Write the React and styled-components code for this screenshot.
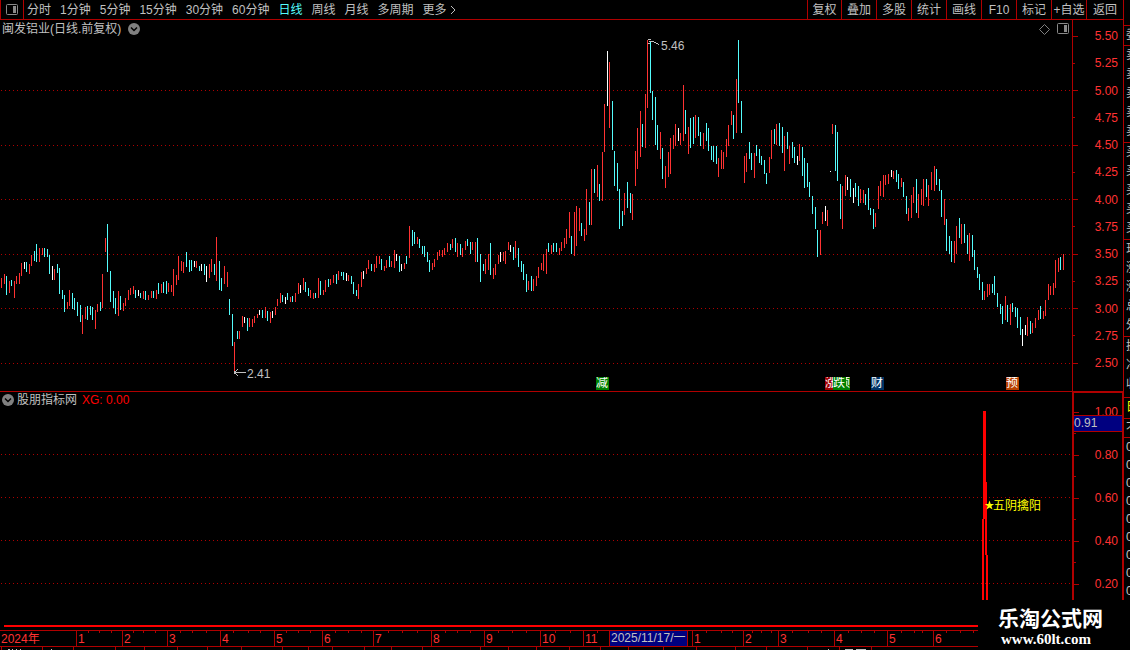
import styled, { createGlobalStyle } from "styled-components";
import { useState } from "react";

const LINE = "#b00000";
const RED = "#ff3232";
const CYAN = "#54fcfc";
const TEXT = "#c0c0c0";

const PLOT_WIDTH = 1072;
const PRICE_TOP = 20;
const PRICE_HEIGHT = 371;
const SIGNAL_TOP = 392;
const SIGNAL_HEIGHT = 238;

// colour, x, high, low
const BARS = `
r,1,278,288 r,4,274,284 c,6,276,295 r,9,281,293 c,11,280,286 r,14,281,298 r,16,276,284 r,19,273,284
r,21,263,276 w,24,262,269 c,26,262,272 r,29,264,274 r,31,255,266 c,34,251,261 c,36,244,262 r,39,248,262
r,42,248,255 c,44,248,257 c,47,249,257 c,49,255,274 w,52,266,280 r,54,269,280 c,57,264,273 c,59,268,294
c,62,290,299 c,64,295,312 r,67,302,309 r,69,290,306 c,72,293,309 c,74,298,310 c,77,302,316 c,80,305,322
r,82,315,334 r,85,307,319 c,87,306,320 c,90,306,315 c,92,307,320 r,95,310,329 r,97,304,312 c,100,302,311
r,102,274,308 r,105,238,252 c,107,224,272 c,110,271,302 c,113,291,308 c,115,298,314 r,118,291,316
c,120,296,310 r,123,303,311 r,125,298,306 r,128,290,300 r,130,288,295 r,133,286,294 c,135,290,298
w,138,290,296 c,140,293,298 r,143,291,299 c,145,291,300 r,148,295,300 r,151,291,298 c,153,291,298
r,156,290,299 c,158,283,294 r,161,284,293 c,163,282,293 c,166,281,294 r,168,283,292 r,171,285,292
r,173,269,296 r,176,275,285 r,178,256,280 r,181,261,271 r,183,262,273 c,186,252,267 c,189,260,272
c,191,260,271 w,194,261,267 r,196,261,268 c,199,266,271 w,201,264,271 c,204,264,275 w,206,266,282
r,209,264,278 r,211,259,272 c,214,264,275 r,216,237,281 c,219,261,290 c,221,278,291 r,224,266,284
r,227,272,287 c,229,299,315 c,232,314,346 r,234,342,373 c,237,331,339 r,239,331,339 r,242,316,327
w,244,317,323 c,247,318,331 r,249,318,327 r,252,319,327 r,254,316,323 r,257,314,318 w,259,310,315
c,262,310,318 r,265,307,318 c,267,311,321 r,270,312,323 w,272,311,318 r,275,307,315 r,277,299,306
r,280,293,303 c,282,295,302 w,285,297,304 c,287,293,300 r,290,297,302 c,292,296,302 r,295,293,302
r,298,283,294 w,300,285,293 r,303,278,290 c,305,282,292 c,308,288,296 r,310,290,298 r,313,293,299
c,315,293,298 r,318,278,298 c,320,281,295 r,323,290,295 r,325,280,292 c,328,279,287 r,330,279,285
r,333,275,283 c,336,274,284 r,338,271,280 c,341,272,276 c,343,272,280 w,346,273,281 r,348,275,281
c,351,276,284 c,353,282,294 c,356,290,296 r,358,284,299 r,361,272,287 w,363,271,279 r,366,268,274
r,368,260,269 c,371,264,271 r,374,264,272 r,376,256,268 r,379,256,264 c,381,259,270 r,384,266,271
r,386,260,268 c,389,256,267 r,391,261,267 r,394,250,268 w,396,254,261 c,399,256,272 w,401,264,271
r,404,263,269 c,406,256,264 r,409,226,258 c,412,230,246 c,414,232,244 r,417,237,244 c,419,239,248
c,422,246,254 c,424,246,257 c,427,252,262 c,429,260,272 r,432,263,270 r,434,259,267 r,437,252,260
r,439,250,256 r,442,250,257 r,444,248,255 r,447,243,252 c,450,244,250 r,452,239,248 c,455,238,252
r,457,243,257 c,460,244,255 r,462,248,257 r,465,241,250 c,467,239,246 c,470,242,254 r,472,242,250
r,475,242,262 c,477,238,262 c,480,254,282 c,483,264,271 r,485,259,274 r,488,254,270 c,490,243,275
r,493,268,279 r,495,264,275 r,498,255,264 w,500,252,262 r,503,252,261 r,505,251,264 r,508,242,250
w,510,245,252 c,513,247,260 r,515,241,258 c,518,248,267 c,521,261,272 c,523,264,280 c,526,274,292
r,528,281,290 c,531,276,291 r,533,279,291 r,536,276,286 r,538,267,278 r,541,263,270 r,543,254,271
r,546,249,274 c,548,243,252 r,551,245,254 c,553,243,252 c,556,243,252 r,559,248,255 r,561,242,251
r,564,238,248 r,566,229,244 r,569,212,238 c,571,236,254 r,574,212,256 r,576,206,246 r,579,208,231
c,581,223,236 r,584,229,241 r,586,189,235 c,589,202,225 r,591,169,225 c,594,169,193 r,597,165,197
c,599,184,201 r,602,152,201 r,604,104,152 w,607,51,106 r,609,62,128 c,612,101,150 c,614,151,186
c,617,163,191 c,619,189,229 c,622,211,226 r,624,193,215 c,627,182,208 c,630,193,213 r,632,194,220
r,635,151,186 r,637,128,169 r,640,111,157 c,642,124,147 r,645,94,148 r,647,40,108 c,650,42,93
c,652,91,120 c,655,97,145 c,657,125,150 r,660,132,159 c,662,148,179 r,665,166,188 r,668,152,177
r,670,138,174 r,673,135,149 r,675,124,146 w,678,128,141 r,680,133,145 r,683,85,141 c,685,110,134
r,688,127,154 c,690,118,148 c,693,117,144 r,695,115,138 c,698,117,136 c,700,132,146 r,703,133,149
c,706,123,141 c,708,128,151 c,711,146,160 c,713,146,162 c,716,146,164 r,718,158,177 r,721,150,169
r,723,152,169 r,726,139,157 r,728,125,146 r,731,111,125 c,733,115,139 r,736,79,133 c,738,40,103
c,741,101,133 r,744,156,183 r,746,153,172 c,749,142,159 c,751,153,170 r,754,153,178 c,756,145,156
c,759,149,163 c,761,156,165 c,764,160,174 c,766,173,184 r,769,157,173 r,771,130,159 c,774,129,144
r,776,124,145 c,779,123,146 c,782,127,153 r,784,136,171 c,787,132,149 r,789,146,164 c,792,142,158
c,794,147,163 w,797,156,165 r,799,144,161 c,802,147,176 c,804,158,188 c,807,163,187 c,809,182,197
c,812,196,214 c,815,207,229 c,817,230,257 r,820,230,255 r,822,212,224 w,825,206,221 r,827,210,226
w,830,171,172 r,832,124,134 c,835,125,171 c,837,132,181 c,840,184,219 r,842,186,229 r,845,175,196
w,847,177,190 c,850,179,197 w,853,188,203 c,855,183,197 c,858,186,206 r,860,189,203 r,863,190,203
c,865,194,205 c,868,188,210 c,870,208,215 c,873,209,229 r,875,213,227 r,878,186,209 r,880,181,196
r,883,175,197 r,885,175,185 r,888,174,184 w,891,170,177 r,893,171,179 c,896,170,182 c,898,174,189
r,901,178,187 c,903,182,197 c,906,196,214 r,908,208,221 r,911,195,218 r,913,187,203 c,916,179,213
r,918,194,218 r,921,189,205 r,923,179,206 c,926,179,197 r,928,185,206 r,931,172,190 r,934,166,191
c,936,169,185 c,939,179,191 c,941,190,217 r,944,199,225 c,946,219,251 c,949,236,254 c,951,241,262
r,954,241,263 r,956,226,254 c,959,218,238 r,961,224,244 c,964,224,243 c,967,235,254 r,969,233,261
c,972,235,257 c,974,250,270 c,977,267,278 c,979,274,290 c,982,282,300 r,984,291,300 r,987,284,297
r,989,284,295 c,992,284,293 c,994,276,295 c,997,293,307 c,1000,304,314 c,1002,306,324 r,1005,296,320
c,1007,305,322 r,1010,304,325 c,1012,303,312 c,1015,307,317 c,1017,308,328 c,1020,317,335 w,1022,329,346
w,1025,325,335 r,1027,317,336 c,1030,321,334 r,1032,323,333 r,1035,318,328 r,1038,310,320 c,1040,306,319
r,1043,311,319 r,1045,300,316 r,1048,284,300 r,1050,286,295 r,1053,283,295 r,1055,260,288 r,1058,258,272
c,1060,257,270 r,1063,254,270
`
  .trim()
  .split(/\s+/)
  .map((item) => {
    const [kind, x, high, low] = item.split(",");
    return { kind, x: Number(x), high: Number(high), low: Number(low) };
  });

const BAR_COLORS = { r: RED, c: CYAN, w: "#ffffff" };

const PERIODS = [
  "分时",
  "1分钟",
  "5分钟",
  "15分钟",
  "30分钟",
  "60分钟",
  "日线",
  "周线",
  "月线",
  "多周期",
];
const ACTIONS = ["复权", "叠加", "多股", "统计", "画线", "F10", "标记", "+自选", "返回"];

const PRICE_LABELS = [
  "5.50",
  "5.25",
  "5.00",
  "4.75",
  "4.50",
  "4.25",
  "4.00",
  "3.75",
  "3.50",
  "3.25",
  "3.00",
  "2.75",
  "2.50",
];
const SIGNAL_LABELS = ["1.00", "", "0.80", "", "0.60", "", "0.40", "", "0.20"];

const MONTHS = [
  { label: "2024年", span: 76 },
  { label: "1", span: 46 },
  { label: "2", span: 45 },
  { label: "3", span: 53 },
  { label: "4", span: 54 },
  { label: "5", span: 48 },
  { label: "6", span: 51 },
  { label: "7", span: 58 },
  { label: "8", span: 53 },
  { label: "9", span: 56 },
  { label: "10", span: 43 },
  { label: "11", span: 109 },
  { label: "1", span: 51 },
  { label: "2", span: 35 },
  { label: "3", span: 56 },
  { label: "4", span: 53 },
  { label: "5", span: 46 },
  { label: "6", span: 139 },
];
const WEEK_TICKS = [
  88, 99, 111, 133, 143, 155, 180, 192, 206, 233, 248, 260, 286, 298, 310, 335, 348, 361, 388, 402,
  417, 445, 457, 470, 498, 512, 526, 555, 570, 597, 706, 721, 732, 752, 761, 771, 792, 808, 821,
  848, 861, 874, 901, 914, 922, 946, 960, 973,
];
const TAB_EDGES = [
  1, 42, 73, 115, 144, 177, 207, 241, 282, 308, 332, 364, 391, 422, 480, 508, 536, 569, 600, 628,
  663, 696, 735, 766, 807, 839, 871,
];

// marks that share a day are cut to the part that stays in view
const MARKS = [
  { label: "减", x: 596, width: 13, color: "#008000" },
  { label: "涨", x: 825, width: 8, color: "#a00000" },
  { label: "跌", x: 833, width: 13, color: "#008000" },
  { label: "预", x: 846, width: 4, color: "#008000", end: true },
  { label: "财", x: 871, width: 13, color: "#003366" },
  { label: "预", x: 1006, width: 13, color: "#b84000" },
];

const SIDE_GROUPS = [
  { height: 20, rows: ["委"] },
  { height: 97, rows: ["卖", "卖", "卖", "卖", "卖"] },
  { height: 97, rows: ["买", "买", "买", "买", "买"] },
  { height: 97, rows: ["现", "涨", "涨", "总", "外"] },
  { height: 61, rows: ["换", "净", "收"] },
  { height: 21, rows: ["日"], color: "#ffff00" },
  { height: 19, rows: ["不"] },
  { height: 213, line: 18, rows: ["0", "0", "0", "0", "0", "0", "0", "0", "0"] },
];

const GlobalStyle = createGlobalStyle`
  body {
    margin: 0;
    background-color: black;
  }
  button {
    font: inherit;
    color: inherit;
    background: none;
    border: 0;
    padding: 0;
    cursor: pointer;
    white-space: nowrap;
  }
`;

const Page = styled.div`
  display: grid;
  grid-template-columns: minmax(0, 1fr) 7px;
  position: relative;
  height: 100vh;
  overflow: hidden;
  background-color: black;
  color: ${TEXT};
  font-family: "Liberation Sans", "Noto Sans CJK SC", sans-serif;
  font-size: 12px;
  line-height: 14px;
`;

const Main = styled.main`
  display: grid;
  grid-template-rows: 20px minmax(0, 372fr) minmax(0, 238fr) 17px 3px;
  min-width: 0;
`;

const Toolbar = styled.header`
  display: flex;
  box-sizing: border-box;
  border-bottom: 1px solid ${LINE};
  overflow: hidden;
`;

const LayoutButton = styled.button`
  display: grid;
  place-items: center;
  box-sizing: border-box;
  width: 24px;
  border-left: 1px solid ${LINE};
  border-right: 1px solid ${LINE};
`;

const Periods = styled.nav`
  display: flex;
  flex: 1;
  gap: 9px;
  padding-left: 3px;
`;

const PeriodButton = styled.button`
  display: flex;
  align-items: center;
  gap: 3px;
  color: ${(props) => (props.$active ? CYAN : TEXT)};
`;

const Actions = styled.div`
  display: grid;
  grid-template-columns: 34px repeat(7, 35px) 37px;
`;

const ActionButton = styled.button`
  border-left: 1px solid ${LINE};
`;

const Panel = styled.section`
  display: grid;
  grid-template-columns: minmax(0, 1fr) 51px;
  min-height: 0;
`;

const Plot = styled.div`
  position: relative;
  box-sizing: border-box;
  min-height: 0;
  border-bottom: ${(props) => (props.$line ? `1px solid ${LINE}` : "0")};
`;

const Drawing = styled.svg`
  position: absolute;
  inset: 0;
  width: 100%;
  height: 100%;
`;

const PlotHeader = styled.div`
  display: flex;
  align-items: center;
  position: relative;
  gap: ${(props) => props.$gap}px;
  height: ${(props) => props.$height}px;
  padding: 0 3px 0 2px;
`;

const PlotTools = styled.div`
  display: flex;
  align-items: center;
  gap: 7px;
  margin-left: auto;
`;

const Reading = styled.span`
  color: #ff0000;
  margin-left: 2px;
`;

const Note = styled.span`
  position: absolute;
  transform: translateY(-50%);
  white-space: nowrap;
  color: ${(props) => props.$color || TEXT};
`;

const Mark = styled.span`
  display: flex;
  justify-content: ${(props) => (props.$end ? "flex-end" : "flex-start")};
  position: absolute;
  bottom: 1px;
  width: ${(props) => props.$width}px;
  height: 13px;
  overflow: hidden;
  line-height: 13px;
  color: white;
  background-color: ${(props) => props.$color};
`;

const Axis = styled.div`
  display: flex;
  flex-direction: column;
  justify-content: space-between;
  box-sizing: border-box;
  border-left: 1px solid ${LINE};
  border-bottom: 1px solid ${LINE};
  padding: 9px 5px 21px 0;
  color: ${RED};
`;

const SignalAxis = styled(Axis)`
  position: relative;
  z-index: 1;
  margin: -1px -1px 0 0;
  border: 2px solid ${LINE};
  padding: 12px 4px 37px 0;
`;

const AxisRow = styled.div`
  display: flex;
  align-items: center;
  justify-content: space-between;
  height: 14px;
`;

const Tick = styled.i`
  width: ${(props) => (props.$major ? 5 : 2)}px;
  height: 1px;
  background-color: ${LINE};
`;

const CursorValue = styled.output`
  position: absolute;
  top: 22px;
  left: 0;
  right: 0;
  height: 15px;
  border-top: 1px solid ${LINE};
  border-bottom: 1px solid ${LINE};
  color: ${TEXT};
  background-color: #000080;
`;

const TimeAxis = styled.div`
  display: grid;
  grid-template-columns: ${(props) =>
    props.$months.map((month) => `minmax(0, ${month.span}fr)`).join(" ")};
  position: relative;
  box-sizing: border-box;
  margin-right: 51px;
  border-top: 1px solid ${LINE};
  border-bottom: 1px solid ${LINE};
  color: ${RED};
`;

const Month = styled.span`
  padding-left: 1px;
  line-height: 16px;
  border-left: ${(props) => (props.$first ? "0" : `1px solid ${LINE}`)};
`;

const CursorDate = styled.span`
  position: absolute;
  top: 0;
  bottom: 0;
  box-sizing: border-box;
  padding: 0 1px;
  line-height: 15px;
  white-space: nowrap;
  color: ${TEXT};
  background-color: #000080;
  border-left: 1px solid ${LINE};
  border-right: 1px solid ${LINE};
`;

const TabStrip = styled.div`
  position: relative;
`;

const Side = styled.aside`
  box-sizing: border-box;
  min-width: 0;
  overflow: hidden;
  border-left: 1px solid ${LINE};
  padding-top: 25px;
`;

const SideGroup = styled.div`
  box-sizing: border-box;
  height: ${(props) => props.$height}px;
  padding-left: 2px;
  overflow: hidden;
  white-space: nowrap;
  line-height: ${(props) => props.$line || 19}px;
  color: ${(props) => props.$color || TEXT};
  border-top: 1px solid ${LINE};
`;

const Watermark = styled.a`
  position: absolute;
  z-index: 2;
  right: 0;
  bottom: 0;
  box-sizing: border-box;
  width: 152px;
  height: 50px;
  padding: 7px 0 0 20px;
  color: white;
  background-color: black;
  text-decoration: none;
`;

const SiteName = styled.strong`
  display: block;
  font-size: 21px;
  line-height: 24px;
`;

const SiteUrl = styled.span`
  display: block;
  padding-left: 3px;
  font-family: "Liberation Serif", serif;
  font-weight: bold;
  font-size: 15px;
  line-height: 16px;
`;

const leftOf = (x) => `${(x / PLOT_WIDTH) * 100}%`;
const topOf = (y, start, height) => `${((y - start) / height) * 100}%`;

function PanelIcon() {
  return (
    <svg width="12" height="12" viewBox="0 0 12 12" aria-hidden="true">
      <rect x="0.5" y="0.5" width="11" height="10" rx="1" fill="none" stroke="#8a8a8a" />
      <rect x="7" y="2" width="3" height="7" fill="#8a8a8a" />
    </svg>
  );
}

function ChevronBadge() {
  return (
    <svg width="12" height="12" viewBox="0 0 12 12" aria-hidden="true">
      <circle cx="6" cy="6" r="6" fill="#808080" />
      <path d="M3 4.5 L6 7.5 L9 4.5" fill="none" stroke="#000" strokeWidth="1.5" />
    </svg>
  );
}

function GridLines({ rows }) {
  return rows.map((y) => (
    <line
      key={y}
      x1="1"
      x2={PLOT_WIDTH}
      y1={y + 0.5}
      y2={y + 0.5}
      stroke={LINE}
      strokeDasharray="1 3"
    />
  ));
}

function AxisRows({ labels }) {
  return labels.map((label, i) => (
    <AxisRow key={i}>
      <Tick $major={i % 2 === 0} />
      {label}
    </AxisRow>
  ));
}

function PricePanel() {
  return (
    <Panel>
      <Plot $line>
        <Drawing
          viewBox={`0 ${PRICE_TOP} ${PLOT_WIDTH} ${PRICE_HEIGHT}`}
          preserveAspectRatio="none"
          shapeRendering="crispEdges"
        >
          <GridLines rows={[90, 145, 199, 254, 308, 363]} />
          {BARS.map((bar) => (
            <rect
              key={bar.x}
              x={bar.x}
              y={bar.high}
              width="1"
              height={bar.low - bar.high}
              fill={BAR_COLORS[bar.kind]}
            />
          ))}
          <path
            d="M234 372.5 H246 M234 372.5 L238 369.5 M234 372.5 L238 375.5 M649 41.5 H653 L659 44.5 M648 39.5 H651 M648 43.5 H650"
            fill="none"
            stroke={TEXT}
          />
        </Drawing>
        <PlotHeader $gap={7} $height={18}>
          闽发铝业(日线.前复权)
          <ChevronBadge />
          <PlotTools>
            <svg width="11" height="11" viewBox="0 0 11 11" aria-hidden="true">
              <path d="M5.5 0.5 L10.5 5.5 L5.5 10.5 L0.5 5.5 Z" fill="none" stroke="#808080" />
            </svg>
            <PanelIcon />
          </PlotTools>
        </PlotHeader>
        <Note style={{ left: leftOf(661), top: topOf(46, PRICE_TOP, PRICE_HEIGHT) }}>5.46</Note>
        <Note style={{ left: leftOf(247), top: topOf(374, PRICE_TOP, PRICE_HEIGHT) }}>2.41</Note>
        {MARKS.map((mark) => (
          <Mark
            key={mark.x}
            $color={mark.color}
            $width={mark.width}
            $end={mark.end}
            style={{ left: leftOf(mark.x) }}
          >
            {mark.label}
          </Mark>
        ))}
      </Plot>
      <Axis>
        <AxisRows labels={PRICE_LABELS} />
      </Axis>
    </Panel>
  );
}

function SignalPanel() {
  return (
    <Panel>
      <Plot>
        <Drawing
          viewBox={`0 ${SIGNAL_TOP} ${PLOT_WIDTH} ${SIGNAL_HEIGHT}`}
          preserveAspectRatio="none"
        >
          <g shapeRendering="crispEdges">
            <GridLines rows={[454, 497, 540, 583]} />
            <path
              d="M4 625 H1072 V627 H4 Z M983 411 H986 V482 H987 V555 H988 V626 H986 V555 H985 V519 H984 V626 H982 V519 H983 Z"
              fill="#ff0000"
            />
          </g>
          <path
            d="M989.5 500.5 L990.7 504 H994.2 L991.4 506.1 L992.5 509.6 L989.5 507.5 L986.5 509.6 L987.6 506.1 L984.8 504 H988.3 Z"
            fill="#ffff00"
          />
        </Drawing>
        <PlotHeader $gap={3} $height={16}>
          <ChevronBadge />
          股朋指标网
          <Reading>XG: 0.00</Reading>
        </PlotHeader>
        <Note
          $color="#ffff00"
          style={{ left: leftOf(993), top: topOf(506, SIGNAL_TOP, SIGNAL_HEIGHT) }}
        >
          五阴擒阳
        </Note>
      </Plot>
      <SignalAxis>
        <AxisRows labels={SIGNAL_LABELS} />
        <CursorValue>0.91</CursorValue>
      </SignalAxis>
    </Panel>
  );
}

function App() {
  const [period, setPeriod] = useState("日线");
  return (
    <Page>
      <GlobalStyle />
      <Main>
        <Toolbar>
          <LayoutButton aria-label="布局">
            <PanelIcon />
          </LayoutButton>
          <Periods>
            {PERIODS.map((name) => (
              <PeriodButton key={name} $active={name === period} onClick={() => setPeriod(name)}>
                {name}
              </PeriodButton>
            ))}
            <PeriodButton>
              更多
              <svg width="6" height="10" viewBox="0 0 6 10" aria-hidden="true">
                <path d="M1 1 L5 5 L1 9" fill="none" stroke={TEXT} />
              </svg>
            </PeriodButton>
          </Periods>
          <Actions>
            {ACTIONS.map((name) => (
              <ActionButton key={name}>{name}</ActionButton>
            ))}
          </Actions>
        </Toolbar>
        <PricePanel />
        <SignalPanel />
        <TimeAxis $months={MONTHS}>
          <Drawing
            viewBox={`0 0 ${PLOT_WIDTH} 15`}
            preserveAspectRatio="none"
            shapeRendering="crispEdges"
          >
            {WEEK_TICKS.map((x) => (
              <rect key={x} x={x} y="0" width="1" height="2" fill={LINE} />
            ))}
          </Drawing>
          {MONTHS.map((month, i) => (
            <Month key={i} $first={i === 0}>
              {month.label}
            </Month>
          ))}
          <CursorDate style={{ left: leftOf(609) }}>2025/11/17/一</CursorDate>
        </TimeAxis>
        <TabStrip>
          <Drawing
            viewBox="0 0 1123 3"
            preserveAspectRatio="none"
            shapeRendering="crispEdges"
          >
            {TAB_EDGES.map((x) => (
              <rect key={x} x={x} y="0" width="1" height="3" fill={LINE} />
            ))}
            <path d="M8 2.5 H10 M12 2.5 H13 M16 2.5 H17 M20 2.5 H21 M51 2.5 H52 M828 2.5 H829" stroke={TEXT} />
            <path d="M845 2.5 H853 M856 2.5 H866" stroke={TEXT} />
          </Drawing>
        </TabStrip>
      </Main>
      <Side>
        {SIDE_GROUPS.map((group, i) => (
          <SideGroup key={i} $height={group.height} $line={group.line} $color={group.color}>
            {group.rows.map((row, j) => (
              <div key={j}>{row}</div>
            ))}
          </SideGroup>
        ))}
      </Side>
      <Watermark href="#">
        <SiteName>乐淘公式网</SiteName>
        <SiteUrl>www.60lt.com</SiteUrl>
      </Watermark>
    </Page>
  );
}

export default App;
